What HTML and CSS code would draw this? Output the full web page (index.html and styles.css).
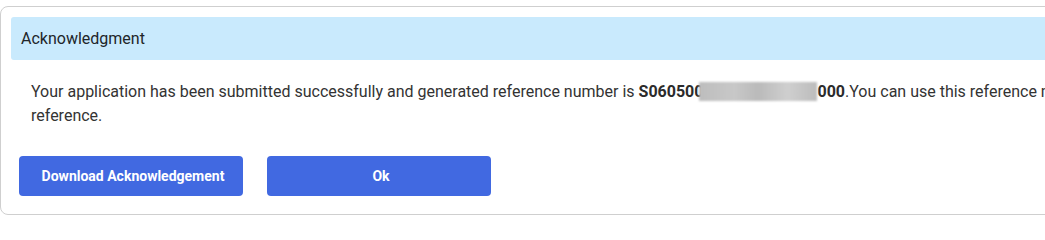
FILE: index.html
```html
<!DOCTYPE html>
<html>
<head>
<meta charset="utf-8">
<link rel="stylesheet" href="styles.css">
</head>
<body>
<div class="card">
  <div class="card-header">Acknowledgment</div>
  <div class="card-body">
    <p class="message">Your application has been submitted successfully and generated reference number is <b>S060500<span class="masked"></span>000</b>.You can use this reference number for future reference.</p>
    <div class="actions">
      <button class="btn">Download Acknowledgement</button>
      <button class="btn">Ok</button>
    </div>
  </div>
</div>
</body>
</html>
```
FILE: styles.css
```css
html, body {
  margin: 0;
  padding: 0;
  background: #ffffff;
  overflow: hidden;
}
body {
  font-family: Roboto, "Liberation Sans", Arial, sans-serif;
  color: #333333;
}
.card {
  margin-top: 6px;
  width: 1240px;
  border: 1px solid #cfcfcf;
  border-radius: 8px;
  padding: 10px 10px 18px 10px;
  box-sizing: border-box;
}
.card-header {
  background: #c9eafd;
  border-radius: 3px;
  height: 43px;
  line-height: 43px;
  padding-left: 10px;
  font-size: 16px;
  color: #212529;
}
.card-body {
  padding: 20px 8px 0 8px;
}
.message {
  margin: 0 0 28px 12px;
  font-size: 16px;
  line-height: 24px;
  color: #333333;
}
.message b {
  font-weight: 700;
  color: #2b2b2b;
}
.masked {
  display: inline-block;
  position: relative;
  width: 118px;
  height: 19px;
  vertical-align: -4px;
  margin-left: -4px;
  background: linear-gradient(90deg, #bdbdbd 0%, #c8c8c8 30%, #bababa 50%, #cfcfcf 75%, #bcbcbc 100%);
  filter: blur(1px);
}
.actions {
  display: flex;
  gap: 24px;
}
.btn {
  width: 224px;
  height: 40px;
  padding: 0 0 0 4px;
  border: none;
  border-radius: 4px;
  background: #4169e1;
  color: #ffffff;
  font-family: Roboto, "Liberation Sans", Arial, sans-serif;
  font-weight: 700;
  font-size: 14px;
  cursor: pointer;
}
```
